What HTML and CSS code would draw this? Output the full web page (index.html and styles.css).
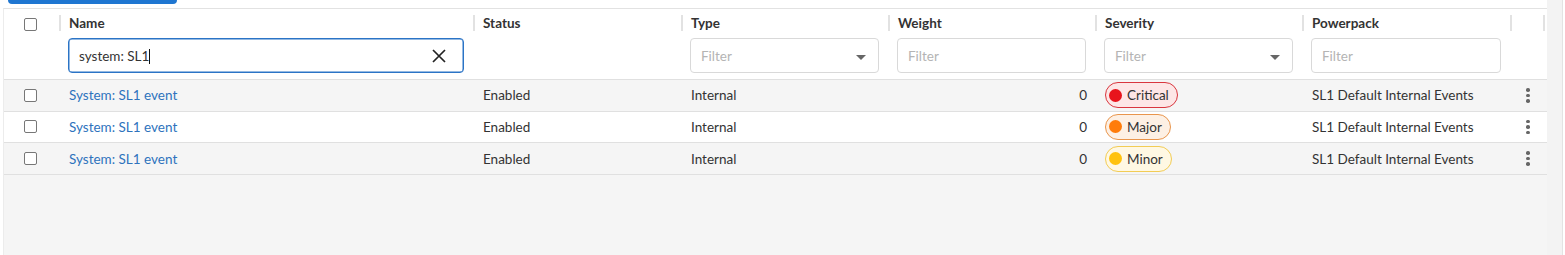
FILE: index.html
```html
<!DOCTYPE html>
<html>
<head>
    <title>Event Policies</title>
    <link rel="stylesheet" href="styles.css">
</head>
<body>
    <div class="page">
        <div class="main">
            <div class="toolbar">
                <div class="btn-primary"></div>
            </div>
            <div class="grid">
                <div class="row head">
                    <div class="cell check-cell">
                        <span class="checkbox"></span>
                    </div>
                    <div class="cell th">
                        <div class="th-label">Name</div>
                        <div class="filter focused">
                            <span class="filter-text">system: SL1<span class="caret"></span></span>
                            <svg class="clear" width="14" height="14" viewBox="0 0 14 14">
                                <path d="M1 1 L13 13 M13 1 L1 13" stroke="#222" stroke-width="1.7" fill="none"/>
                            </svg>
                        </div>
                    </div>
                    <div class="cell th">
                        <div class="th-label">Status</div>
                    </div>
                    <div class="cell th">
                        <div class="th-label">Type</div>
                        <div class="filter">
                            <span class="placeholder">Filter</span>
                            <span class="arrow"></span>
                        </div>
                    </div>
                    <div class="cell th">
                        <div class="th-label">Weight</div>
                        <div class="filter">
                            <span class="placeholder">Filter</span>
                        </div>
                    </div>
                    <div class="cell th">
                        <div class="th-label">Severity</div>
                        <div class="filter">
                            <span class="placeholder">Filter</span>
                            <span class="arrow"></span>
                        </div>
                    </div>
                    <div class="cell th">
                        <div class="th-label">Powerpack</div>
                        <div class="filter">
                            <span class="placeholder">Filter</span>
                        </div>
                    </div>
                    <div class="cell th last">
                        <div class="th-label">&nbsp;</div>
                    </div>
                </div>

                <div class="row body-row shaded">
                    <div class="cell check-cell"><span class="checkbox"></span></div>
                    <div class="cell"><a class="link">System: SL1 event</a></div>
                    <div class="cell">Enabled</div>
                    <div class="cell">Internal</div>
                    <div class="cell num">0</div>
                    <div class="cell">
                        <span class="badge critical"><span class="dot"></span>Critical</span>
                    </div>
                    <div class="cell">SL1 Default Internal Events</div>
                    <div class="cell menu"><span class="kebab"><i></i><i></i><i></i></span></div>
                </div>
                <div class="row body-row">
                    <div class="cell check-cell"><span class="checkbox"></span></div>
                    <div class="cell"><a class="link">System: SL1 event</a></div>
                    <div class="cell">Enabled</div>
                    <div class="cell">Internal</div>
                    <div class="cell num">0</div>
                    <div class="cell">
                        <span class="badge major"><span class="dot"></span>Major</span>
                    </div>
                    <div class="cell">SL1 Default Internal Events</div>
                    <div class="cell menu"><span class="kebab"><i></i><i></i><i></i></span></div>
                </div>
                <div class="row body-row shaded">
                    <div class="cell check-cell"><span class="checkbox"></span></div>
                    <div class="cell"><a class="link">System: SL1 event</a></div>
                    <div class="cell">Enabled</div>
                    <div class="cell">Internal</div>
                    <div class="cell num">0</div>
                    <div class="cell">
                        <span class="badge minor"><span class="dot"></span>Minor</span>
                    </div>
                    <div class="cell">SL1 Default Internal Events</div>
                    <div class="cell menu"><span class="kebab"><i></i><i></i><i></i></span></div>
                </div>
            </div>
        </div>
        <div class="scroll-strip"></div>
    </div>
</body>
</html>
```

FILE: styles.css
```css
body {
    margin: 0;
    font-family: Lato, "Open Sans", sans-serif;
    font-size: 13.5px;
    color: #333;
    background-color: #fff;
}

.page {
    display: flex;
    height: 100vh;
}

.main {
    width: 1547px;
    display: flex;
    flex-direction: column;
}

.toolbar {
    height: 8px;
    padding-left: 8px;
}

.btn-primary {
    width: 169px;
    height: 4px;
    background-color: #1f76d1;
    border-radius: 0 0 6px 6px;
}

.grid {
    flex: 1;
    margin-left: 3px;
    background-color: #f5f5f5;
    border-top: 1px solid #e2e2e2;
    border-left: 1px solid #ececec;
}

.row {
    display: grid;
    grid-template-columns: 55px 414px 208px 207px 207px 207px 208px 37px;
}

.head {
    background-color: #fff;
    height: 70px;
    border-bottom: 1px solid #e0e0e0;
}

.cell {
    padding-left: 10px;
    min-width: 0;
    display: flex;
    align-items: center;
    white-space: nowrap;
}

.check-cell {
    padding-left: 20px;
}

.head .check-cell {
    align-items: flex-start;
    padding-top: 9px;
}

.th {
    padding-left: 0;
    flex-direction: column;
    align-items: stretch;
}

.th-label {
    margin-top: 6px;
    border-left: 2px solid #e2e2e2;
    padding-left: 8px;
    height: 16px;
    line-height: 16px;
    font-weight: bold;
}

.th.last {
    border-right: 2px solid transparent;
}

.th.last .th-label {
    border-right: 2px solid #e2e2e2;
}

.filter {
    margin: 7px 9px 0 9px;
    height: 35px;
    box-sizing: border-box;
    border: 1px solid #d9d9d9;
    border-radius: 4px;
    display: flex;
    align-items: center;
    padding: 0 12px 0 10px;
}

.filter.focused {
    border-color: #2b74c6;
    box-shadow: inset 0 0 0 0.5px #2b74c6;
    padding-right: 17px;
}

.filter-text {
    flex: 1;
    color: #333;
}

.caret {
    display: inline-block;
    width: 1px;
    height: 15px;
    background-color: #111;
    vertical-align: -3px;
}

.placeholder {
    flex: 1;
    color: #b4b4b4;
}

.arrow {
    width: 0;
    height: 0;
    border-left: 5px solid transparent;
    border-right: 5px solid transparent;
    border-top: 5px solid #666;
    margin-top: 3px;
}

.body-row {
    height: 30.67px;
    background-color: #fff;
    border-bottom: 1px solid #e0e0e0;
}

.body-row.shaded {
    background-color: #f5f5f5;
}

.checkbox {
    display: block;
    width: 13px;
    height: 13px;
    box-sizing: border-box;
    border: 1.5px solid #777;
    border-radius: 2px;
    background-color: #fff;
}

.link {
    color: #2e73bd;
    text-decoration: none;
}

.num {
    justify-content: flex-end;
    padding-right: 8px;
}

.badge {
    display: inline-flex;
    align-items: center;
    height: 26px;
    box-sizing: border-box;
    padding: 0 8px 0 3px;
    border-radius: 13px;
    border: 1px solid;
    color: #333;
}

.dot {
    width: 13px;
    height: 13px;
    border-radius: 50%;
    margin-right: 5px;
}

.critical {
    background-color: #fde6e6;
    border-color: #d9363e;
}

.critical .dot {
    background-color: #e8141c;
}

.major {
    background-color: #fdf0e4;
    border-color: #e9954c;
}

.major .dot {
    background-color: #ff7c0a;
}

.minor {
    background-color: #fff8e3;
    border-color: #f2cc55;
}

.minor .dot {
    background-color: #ffc20e;
}

.menu {
    padding-left: 16px;
}

.kebab {
    display: flex;
    flex-direction: column;
    gap: 2px;
}

.kebab i {
    width: 3.5px;
    height: 3.5px;
    border-radius: 50%;
    background-color: #666;
}

.scroll-strip {
    flex: 1;
    background-color: #f3f3f3;
    border-right: 1px solid #e3e3e3;
    margin-right: 2px;
}
```
